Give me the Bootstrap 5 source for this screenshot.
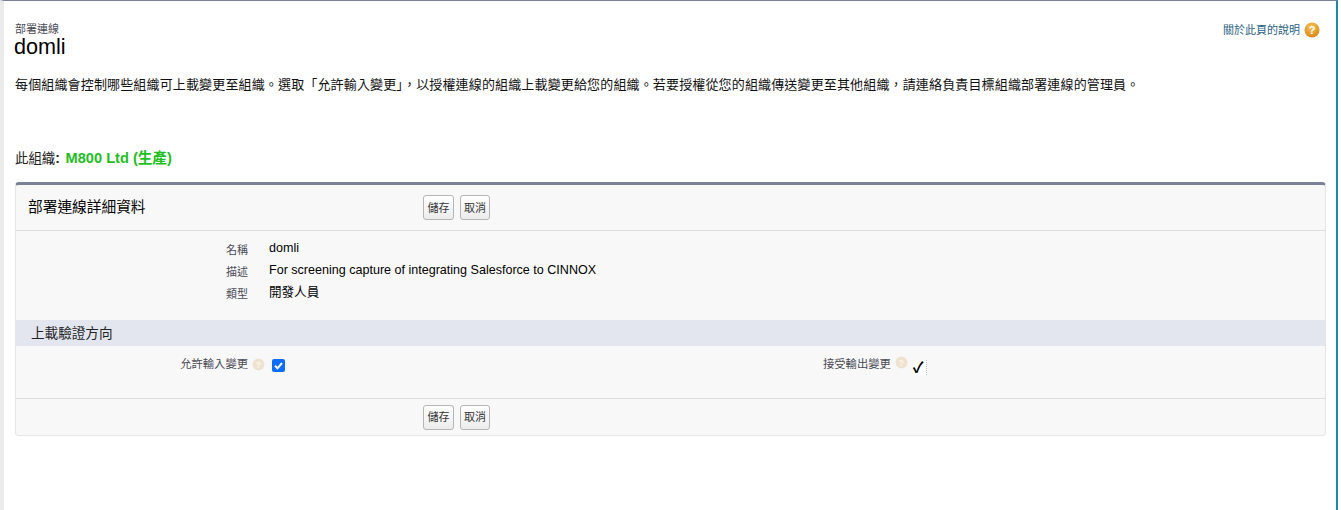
<!DOCTYPE html>
<html lang="zh-Hant">
<head>
<meta charset="utf-8">
<title>部署連線</title>
<link rel="stylesheet" href="https://cdn.jsdelivr.net/npm/bootstrap@5.3.0/dist/css/bootstrap.min.css">
<style>
html,body{height:510px;overflow:hidden;background:#fff}
body{font-family:"Liberation Sans","Noto Sans CJK TC",sans-serif;font-size:12px;color:#000}
.frame{width:1338px;height:510px;border-top:1px solid #7b8296;border-left:4px solid #ebebeb;border-right:2px solid #1f8aa8;padding:0 11px}
.head-row{padding-top:22px;height:72px}
.crumb{font-size:11px;line-height:12px;color:#4a4a56}
.ttl{font-size:21.6px;line-height:24px;margin:0 0 0 -1px}
.help{font-size:11px;color:#2a5f80;margin-top:-1px;margin-right:5px}
.q-icon{width:16px;height:16px}
.intro{font-size:13px;letter-spacing:.15px;line-height:16px;margin:0;color:#111;height:74px;padding-top:4px}
.org{font-size:13.4px;line-height:16px;color:#222;height:35px;padding-top:3px;white-space:nowrap}
.org b{color:#1fbf1f;font-size:14.6px}
.org .colon{color:#222;font-size:14px;margin-right:2px}
.detail{width:1311px;background:#f8f8f8;border:1px solid #e6e6e6;border-top:3px solid #7b8296;border-radius:4px}
.bar{height:46px;padding-left:12px}
.bar-bottom{height:37px;border-top:1px solid #dedede}
.bar-top{border-bottom:1px solid #dedede}
.bar h2{font-size:14.7px;font-weight:400;margin:0;width:395px;color:#000}
.spacer-btn{width:395px}
.sf-btn{font-size:11px;line-height:14px;padding:4px 3px;color:#333;background:linear-gradient(#fff,#ececec);border:1px solid #b5b5b5;border-radius:3px;height:25px;min-width:30px;margin-right:6px}
.sf-first{width:31px}
.fields{height:89px;padding-top:9px}
.f-row{height:22px}
.lab{width:232px;text-align:right;font-size:11px;color:#4a4a56;padding-top:2px}
.val{padding-left:21px;font-size:12.55px;line-height:16px;color:#000}
.section{background:#e3e6ef;height:26px;font-size:13.6px;line-height:27px;padding-left:15px;color:#222}
.perm{height:52px;padding-top:10px}
.perm-left{width:807px}
.plab{font-size:11.3px;color:#4a4a56;line-height:16px}
.tip{width:13px;height:13px;margin-left:4px;flex:none}
.cb{width:13px;height:13px;margin:3px 0 0 7px;border-radius:2px;background:#0d6efd;display:block}
.plab-left{width:249px;text-align:right;justify-content:flex-end}
.chk{font-size:15px;line-height:16px;margin-left:5px;width:14px;height:15px;margin-top:4px;color:#000;border-right:1px dotted #bbb;background:#fff;font-weight:700}
</style>
</head>
<body>
<div class="frame">
  <div class="head-row d-flex justify-content-between">
    <div>
      <div class="crumb">部署連線</div>
      <div class="ttl">domli</div>
    </div>
    <div class="help d-flex align-items-start gap-1">
      <span>關於此頁的說明</span>
      <svg class="q-icon" viewBox="0 0 16 16"><defs><radialGradient id="g1" cx=".45" cy=".3" r=".8"><stop offset="0" stop-color="#f7c455"/><stop offset="1" stop-color="#d57f10"/></radialGradient></defs><circle cx="8" cy="8" r="7.5" fill="url(#g1)"/><text x="8" y="12" font-size="11" font-weight="700" text-anchor="middle" fill="#fff" font-family="Liberation Sans">?</text></svg>
    </div>
  </div>
  <p class="intro">每個組織會控制哪些組織可上載變更至組織。選取「允許輸入變更」，以授權連線的組織上載變更給您的組織。若要授權從您的組織傳送變更至其他組織，請連絡負責目標組織部署連線的管理員。</p>
  <div class="org">此組織<b class="colon">:</b> <b>M800 Ltd (生產)</b></div>
  <div class="detail">
    <div class="bar bar-top d-flex align-items-center">
      <h2>部署連線詳細資料</h2>
      <button class="sf-btn sf-first" type="button">儲存</button>
      <button class="sf-btn" type="button">取消</button>
    </div>
    <div class="fields">
      <div class="f-row d-flex"><div class="lab">名稱</div><div class="val">domli</div></div>
      <div class="f-row d-flex"><div class="lab">描述</div><div class="val">For screening capture of integrating Salesforce to CINNOX</div></div>
      <div class="f-row d-flex"><div class="lab">類型</div><div class="val">開發人員</div></div>
    </div>
    <div class="section">上載驗證方向</div>
    <div class="perm d-flex">
      <div class="perm-left d-flex">
        <div class="plab plab-left d-flex align-items-center align-self-start"><span>允許輸入變更</span><svg class="tip" viewBox="0 0 12 12"><circle cx="6" cy="6" r="5.5" fill="#efe2d0"/><text x="6" y="9" font-size="8" font-weight="700" text-anchor="middle" fill="#fbf6ee" font-family="Liberation Sans">?</text></svg></div>
        <svg class="cb" viewBox="0 0 13 13"><path d="M3 6.8 5.5 9.3 10 4" fill="none" stroke="#fff" stroke-width="2"/></svg>
      </div>
      <div class="plab d-flex align-items-start">
        <span>接受輸出變更</span><svg class="tip" viewBox="0 0 12 12"><circle cx="6" cy="6" r="5.5" fill="#efe2d0"/><text x="6" y="9" font-size="8" font-weight="700" text-anchor="middle" fill="#fbf6ee" font-family="Liberation Sans">?</text></svg>
        <span class="chk">✓</span>
      </div>
    </div>
    <div class="bar bar-bottom d-flex align-items-center">
      <div class="spacer-btn" aria-hidden="true"></div>
      <button class="sf-btn sf-first" type="button">儲存</button>
      <button class="sf-btn" type="button">取消</button>
    </div>
  </div>
</div>
<script src="https://cdn.jsdelivr.net/npm/bootstrap@5.3.0/dist/js/bootstrap.bundle.min.js"></script>
</body>
</html>
